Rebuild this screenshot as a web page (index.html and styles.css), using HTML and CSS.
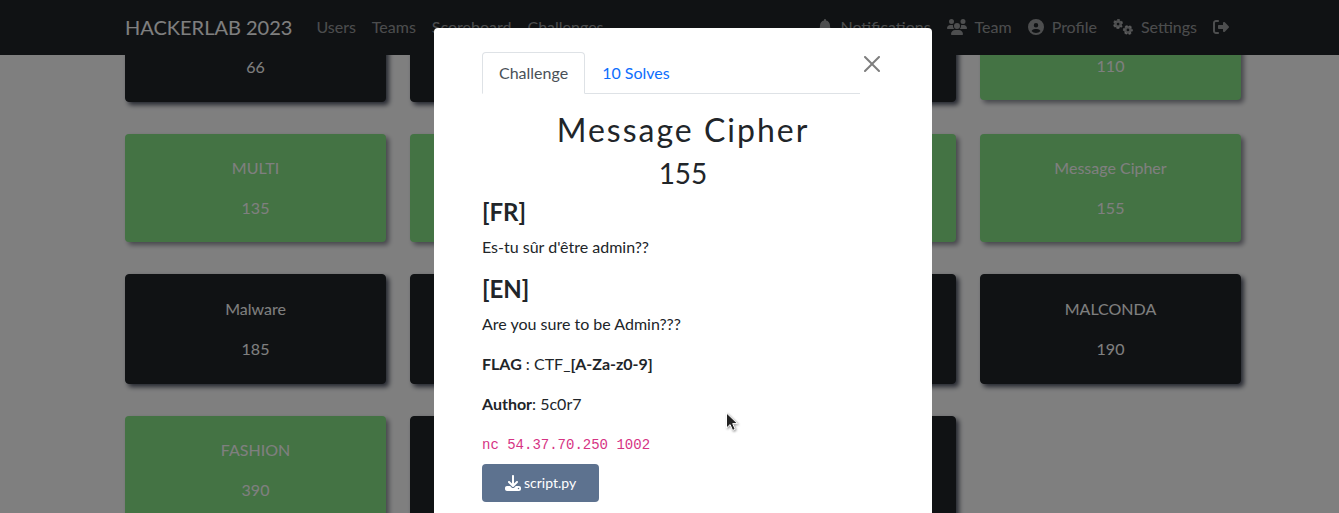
FILE: index.html
```html
<!DOCTYPE html>
<html lang="en">
<head>
<meta charset="utf-8">
<title>HACKERLAB 2023</title>
<link rel="stylesheet" href="styles.css">
</head>
<body>
<nav class="navbar">
  <div class="container navbar-row">
    <a class="brand" href="#">HACKERLAB 2023</a>
    <div class="nav-group">
      <a class="nav-link" href="#">Users</a>
      <a class="nav-link" href="#">Teams</a>
      <a class="nav-link" href="#">Scoreboard</a>
      <a class="nav-link" href="#">Challenges</a>
    </div>
    <div class="nav-group nav-end">
      <a class="nav-link" href="#"><svg class="icon" viewBox="0 0 448 512"><path d="M224 0c-17.7 0-32 14.3-32 32V51.2C119 66 64 130.6 64 208v18.8c0 47-17.3 92.4-48.5 127.6l-7.4 8.3c-8.4 9.4-10.4 22.9-5.3 34.4S19.4 416 32 416H416c12.6 0 24-7.4 29.2-18.9s3.1-25-5.3-34.4l-7.4-8.3C401.3 319.2 384 273.9 384 226.8V208c0-77.4-55-142-128-156.8V32c0-17.7-14.3-32-32-32z"/></svg>Notifications</a>
      <a class="nav-link" href="#"><svg class="icon" viewBox="0 0 640 512"><path d="M144 0a80 80 0 1 1 0 160A80 80 0 1 1 144 0zM512 0a80 80 0 1 1 0 160A80 80 0 1 1 512 0zM0 298.7C0 239.8 47.8 192 106.7 192h42.7c15.9 0 31 3.5 44.6 9.7c-1.3 7.2-1.9 14.7-1.9 22.3c0 38.2 16.8 72.5 43.3 96c-.2 0-.4 0-.7 0H21.3C9.6 320 0 310.4 0 298.7zM405.3 320c-.2 0-.4 0-.7 0c26.6-23.5 43.3-57.8 43.3-96c0-7.6-.7-15-1.9-22.3c13.6-6.3 28.7-9.7 44.6-9.7h42.7C592.2 192 640 239.8 640 298.7c0 11.8-9.6 21.3-21.3 21.3H405.3zM224 224a96 96 0 1 1 192 0 96 96 0 1 1-192 0zM128 485.3C128 411.7 187.7 352 261.3 352H378.7C452.3 352 512 411.7 512 485.3c0 14.7-11.9 26.7-26.7 26.7H154.7c-14.7 0-26.7-11.9-26.7-26.7z"/></svg>Team</a>
      <a class="nav-link" href="#"><svg class="icon" viewBox="0 0 512 512"><path d="M399 384.2C376.9 345.8 335.4 320 288 320H224c-47.4 0-88.9 25.8-111 64.2c35.2 39.2 86.2 63.8 143 63.8s107.8-24.7 143-63.8zM0 256a256 256 0 1 1 512 0A256 256 0 1 1 0 256zm256 16a72 72 0 1 0 0-144 72 72 0 1 0 0 144z"/></svg>Profile</a>
      <a class="nav-link" href="#"><svg class="icon" viewBox="0 0 640 512"><g fill="none" stroke="currentColor"><circle cx="162" cy="160" r="84" stroke-width="80"/><circle cx="162" cy="160" r="136" stroke-width="50" stroke-dasharray="82 60.4" stroke-dashoffset="41" transform="rotate(30 162 160)"/><circle cx="478" cy="350" r="84" stroke-width="80"/><circle cx="478" cy="350" r="136" stroke-width="50" stroke-dasharray="82 60.4" stroke-dashoffset="41"/></g></svg>Settings</a>
      <a class="nav-link" href="#" aria-label="Logout"><svg class="icon" viewBox="0 0 512 512"><path d="M377.9 105.9L500.7 228.7c7.2 7.2 11.3 17.1 11.3 27.3s-4.1 20.1-11.3 27.3L377.9 406.1c-6.4 6.4-15 9.9-24 9.9c-18.7 0-33.9-15.2-33.9-33.9l0-62.1-128 0c-17.7 0-32-14.3-32-32l0-64c0-17.7 14.3-32 32-32l128 0 0-62.1c0-18.7 15.2-33.9 33.9-33.9c9 0 17.6 3.6 24 9.9zM160 96L96 96c-17.7 0-32 14.3-32 32l0 256c0 17.7 14.3 32 32 32l64 0c17.7 0 32 14.3 32 32s-14.3 32-32 32l-64 0c-53 0-96-43-96-96L0 128C0 75 43 32 96 32l64 0c17.7 0 32 14.3 32 32s-14.3 32-32 32z"/></svg></a>
    </div>
  </div>
</nav>

<main class="board">
  <div class="container challenge-grid">
    <button class="challenge"><span></span><span>66</span></button>
    <button class="challenge"></button>
    <button class="challenge"></button>
    <button class="challenge solved"><span></span><span>110</span></button>

    <button class="challenge solved"><span>MULTI</span><span>135</span></button>
    <button class="challenge solved"></button>
    <button class="challenge solved"></button>
    <button class="challenge solved"><span>Message Cipher</span><span>155</span></button>

    <button class="challenge"><span>Malware</span><span>185</span></button>
    <button class="challenge"></button>
    <button class="challenge"></button>
    <button class="challenge"><span>MALCONDA</span><span>190</span></button>

    <button class="challenge solved"><span>FASHION</span><span>390</span></button>
    <button class="challenge"></button>
    <button class="challenge"></button>
  </div>
</main>

<div class="backdrop">
  <div class="modal" role="dialog" aria-labelledby="challenge-name">
    <div class="modal-top">
      <div class="tabs" role="tablist">
        <button class="tab active" role="tab" aria-selected="true">Challenge</button>
        <button class="tab" role="tab" aria-selected="false">10 Solves</button>
      </div>
      <button class="close" aria-label="Close"><svg viewBox="0 0 16 16"><path d="M.293.293a1 1 0 011.414 0L8 6.586 14.293.293a1 1 0 111.414 1.414L9.414 8l6.293 6.293a1 1 0 01-1.414 1.414L8 9.414l-6.293 6.293a1 1 0 01-1.414-1.414L6.586 8 .293 1.707a1 1 0 010-1.414z"/></svg></button>
    </div>
    <h2 class="challenge-name" id="challenge-name">Message Cipher</h2>
    <h3 class="challenge-value">155</h3>
    <div class="description">
      <h4>[FR]</h4>
      <p>Es-tu sûr d'être admin??</p>
      <h4>[EN]</h4>
      <p>Are you sure to be Admin???</p>
      <p><strong>FLAG</strong> : CTF_<strong>[A-Za-z0-9]</strong></p>
      <p><strong>Author</strong>: 5c0r7</p>
      <code class="connection">nc 54.37.70.250 1002</code>
    </div>
    <a class="download" href="#"><svg class="icon" viewBox="0 0 512 512"><path d="M288 32c0-17.7-14.3-32-32-32s-32 14.3-32 32V274.7l-73.4-73.4c-12.5-12.5-32.8-12.5-45.3 0s-12.5 32.8 0 45.3l128 128c12.5 12.5 32.8 12.5 45.3 0l128-128c12.5-12.5 12.5-32.8 0-45.3s-32.8-12.5-45.3 0L288 274.7V32zM64 352c-35.3 0-64 28.7-64 64v32c0 35.3 28.7 64 64 64H448c35.3 0 64-28.7 64-64V416c0-35.3-28.7-64-64-64H346.5l-45.3 45.3c-25 25-65.5 25-90.5 0L165.5 352H64zm368 56a24 24 0 1 1 0 48 24 24 0 1 1 0-48z"/></svg>script.py</a>
  </div>
</div>
<svg class="pointer" viewBox="0 0 12 20"><path d="M.5 1v15l3.6-3.4 2.5 5.8 2.6-1.1-2.5-5.7h4.8z"/></svg>
</body>
</html>
```
FILE: styles.css
```css
* {
  box-sizing: border-box;
}

body {
  margin: 0;
  height: 100vh;
  overflow: hidden;
  background: #fff;
  color: #212529;
  font-family: Lato, "Open Sans", sans-serif;
  font-size: 16px;
  line-height: 24px;
}

button {
  font: inherit;
}

.container {
  max-width: 1140px;
  margin: 0 auto;
  padding: 0 12px;
}

.navbar {
  position: fixed;
  top: 0;
  left: 0;
  right: 0;
  z-index: 1;
  padding: 7px 0 8px 27px;
  background: #212529;
}

.navbar-row {
  display: flex;
  align-items: center;
}

.brand {
  margin-right: 16px;
  color: #fff;
  font-size: 20px;
  line-height: 30px;
  text-decoration: none;
}

.nav-group {
  display: flex;
}

.nav-end {
  margin-left: auto;
  padding-right: 4px;
}

.nav-link {
  display: flex;
  align-items: center;
  gap: 8px;
  padding: 8px;
  color: rgba(255, 255, 255, 0.55);
  text-decoration: none;
}

.icon {
  height: 16px;
  fill: currentColor;
}

.board {
  margin-top: -8px;
  padding-left: 27px;
}

.challenge-grid {
  display: grid;
  grid-template-columns: repeat(4, 1fr);
  align-items: start;
  gap: 32px 24px;
}

.challenge {
  display: flex;
  flex-direction: column;
  align-items: center;
  gap: 16px;
  min-height: 110px;
  padding: 22px;
  border: 1px solid #212529;
  border-radius: 4px;
  background: #212529;
  box-shadow: 3px 3px 5px #4b5060;
  color: #fff;
}

.challenge span {
  min-height: 24px;
}

.challenge.solved {
  min-height: 108px;
  border: 0;
  background: #88e688;
  box-shadow: 3px 3px 5px #8d8f98;
}

.backdrop {
  position: fixed;
  inset: 0;
  z-index: 2;
  padding: 28px 0 0 27px;
  overflow: hidden;
  background: rgba(0, 0, 0, 0.5);
}

.modal {
  max-width: 498px;
  margin: 0 auto;
  padding: 24px 48px 48px;
  border-radius: 4px;
  background: #fff;
}

.modal-top {
  display: flex;
  align-items: flex-start;
}

.tabs {
  display: flex;
  flex: 1;
  border-bottom: 1px solid #dee2e6;
}

.tab {
  margin-bottom: -1px;
  padding: 8px 16px;
  border: 1px solid transparent;
  border-radius: 4px 4px 0 0;
  background: transparent;
  color: #0d6efd;
}

.tab.active {
  border-color: #dee2e6 #dee2e6 #fff;
  background: #fff;
  color: #495057;
}

.close {
  display: grid;
  place-items: center;
  width: 24px;
  height: 24px;
  padding: 0;
  border: 0;
  background: transparent;
  opacity: 0.5;
}

.close svg {
  width: 16px;
}

.challenge-name,
.challenge-value {
  margin: 0;
  font-weight: 400;
  text-align: center;
}

.challenge-name {
  margin-top: 16px;
  font-size: 32px;
  line-height: 40px;
  letter-spacing: 2px;
}

.challenge-value {
  margin: 6px 0 8px;
  font-size: 28px;
  line-height: 34px;
}

.description h4 {
  margin: 0 0 9px;
  font-size: 24px;
  line-height: 28px;
}

.description p {
  margin: 0 0 16px;
}

.connection {
  display: block;
  margin-bottom: 6px;
  color: #d63384;
  font-family: "Liberation Mono", monospace;
  font-size: 14px;
  line-height: 26px;
}

.download {
  display: inline-flex;
  align-items: center;
  gap: 3px;
  padding: 7px 23px;
  border-radius: 4px;
  background: #5d728f;
  color: #fff;
  font-size: 14px;
  text-decoration: none;
}

.pointer {
  position: absolute;
  left: 726px;
  top: 412px;
  z-index: 3;
  width: 12px;
  height: 20px;
  fill: #222;
  stroke: #fff;
  filter: drop-shadow(1px 1px 1px rgba(0, 0, 0, 0.4));
}
```
